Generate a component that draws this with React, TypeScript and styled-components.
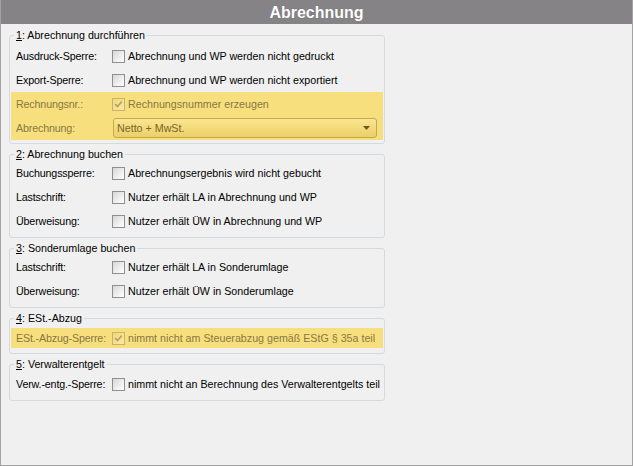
import React from "react";
import styled, { createGlobalStyle } from "styled-components";

const GlobalStyle = createGlobalStyle`
  html, body {
    margin: 0;
    padding: 0;
    background: #f0f0f0;
  }
  body {
    font-family: "Liberation Sans", Arial, sans-serif;
    font-size: 10.7px;
    color: #000;
  }
`;

const Window = styled.div`
  width: 633px;
  height: 466px;
  box-sizing: border-box;
  border: 1px solid #a3a3a3;
  border-top: none;
  background: #f0f0f0;
  display: flex;
  flex-direction: column;
`;

const Header = styled.div`
  height: 24px;
  flex: none;
  background: #868386;
  color: #fff;
  font-weight: bold;
  font-size: 16px;
  line-height: 25px;
  text-align: center;
  text-shadow: 0 0 1px rgba(60, 60, 60, 0.35);
`;

const Content = styled.div`
  display: flex;
  flex-direction: column;
  align-items: flex-start;
  gap: 3px;
  padding: 4px 0 0 8px;
`;

const Group = styled.fieldset<{ $top?: number; $bottom?: number }>`
  margin: 0;
  min-width: 0;
  width: 376px;
  box-sizing: border-box;
  border: 1px solid #d3dbe1;
  border-radius: 3px;
  padding: ${(p) => p.$top ?? 0}px 1px ${(p) => p.$bottom ?? 4}px;
`;

const Legend = styled.legend`
  margin-left: 3px;
  padding: 0 2px;
  line-height: 14px;
`;

const Key = styled.span`
  text-decoration: underline;
`;

const Highlight = styled.div`
  background: #f8df7e;
`;

const Row = styled.div<{ $h?: number }>`
  display: flex;
  align-items: center;
  height: ${(p) => p.$h ?? 24}px;
  padding-left: 5px;
`;

const Label = styled.span<{ $muted?: boolean }>`
  width: 96px;
  flex: none;
  white-space: nowrap;
  letter-spacing: -0.15px;
  color: ${(p) => (p.$muted ? "#877843" : "#000")};
`;

const Text = styled.span<{ $muted?: boolean }>`
  margin-left: 3px;
  white-space: nowrap;
  color: ${(p) => (p.$muted ? "#877843" : "#000")};
`;

const Box = styled.span<{ $muted?: boolean }>`
  width: 13px;
  height: 13px;
  box-sizing: border-box;
  flex: none;
  display: flex;
  align-items: center;
  justify-content: center;
  border: 1px solid ${(p) => (p.$muted ? "#c9b36a" : "#8e8f8f")};
  background: ${(p) =>
    p.$muted
      ? "linear-gradient(135deg, #f0d77c 0%, #fbeaa6 100%)"
      : "linear-gradient(135deg, #d6d6d6 0%, #f0f0f0 60%, #ffffff 100%)"};
`;

const Select = styled.div`
  margin-left: 1px;
  width: 264px;
  height: 20px;
  box-sizing: border-box;
  display: flex;
  align-items: center;
  justify-content: space-between;
  padding: 0 6px 0 3px;
  border: 1px solid #c4a94c;
  border-radius: 3px;
  background: linear-gradient(#fae590 0%, #f4da7a 50%, #ebcf6a 100%);
  color: #74662f;
`;

const Check = ({ checked, muted }: { checked?: boolean; muted?: boolean }) => (
  <Box $muted={muted}>
    {checked && (
      <svg width="9" height="9" viewBox="0 0 9 9">
        <path
          d="M1.2 4.2 L3.5 6.6 L7.8 1.6"
          fill="none"
          stroke="#b8a45a"
          strokeWidth="1.7"
        />
      </svg>
    )}
  </Box>
);

const Arrow = () => (
  <svg width="7" height="4" viewBox="0 0 7 4">
    <path d="M0 0 H7 L3.5 4 Z" fill="#6e5a1c" />
  </svg>
);

interface Item {
  label: string;
  text: string;
}

const CheckRow = ({ label, text }: Item) => (
  <Row>
    <Label>{label}</Label>
    <Check />
    <Text>{text}</Text>
  </Row>
);

export default function App() {
  return (
    <>
      <GlobalStyle />
      <Window>
        <Header>Abrechnung</Header>
        <Content>
          <Group $top={2} $bottom={3}>
            <Legend>
              <Key>1</Key>: Abrechnung durchführen
            </Legend>
            <CheckRow label="Ausdruck-Sperre:" text="Abrechnung und WP werden nicht gedruckt" />
            <CheckRow label="Export-Sperre:" text="Abrechnung und WP werden nicht exportiert" />
            <Highlight>
              <Row>
                <Label $muted>Rechnungsnr.:</Label>
                <Check checked muted />
                <Text $muted>Rechnungsnummer erzeugen</Text>
              </Row>
              <Row>
                <Label $muted>Abrechnung:</Label>
                <Select>
                  <span>Netto + MwSt.</span>
                  <Arrow />
                </Select>
              </Row>
            </Highlight>
          </Group>

          <Group>
            <Legend>
              <Key>2</Key>: Abrechnung buchen
            </Legend>
            <CheckRow label="Buchungssperre:" text="Abrechnungsergebnis wird nicht gebucht" />
            <CheckRow label="Lastschrift:" text="Nutzer erhält LA in Abrechnung und WP" />
            <CheckRow label="Überweisung:" text="Nutzer erhält ÜW in Abrechnung und WP" />
          </Group>

          <Group>
            <Legend>
              <Key>3</Key>: Sonderumlage buchen
            </Legend>
            <CheckRow label="Lastschrift:" text="Nutzer erhält LA in Sonderumlage" />
            <CheckRow label="Überweisung:" text="Nutzer erhält ÜW in Sonderumlage" />
          </Group>

          <Group $top={3} $bottom={5}>
            <Legend>
              <Key>4</Key>: ESt.-Abzug
            </Legend>
            <Highlight>
              <Row $h={20}>
                <Label $muted>ESt.-Abzug-Sperre:</Label>
                <Check checked muted />
                <Text $muted>nimmt nicht am Steuerabzug gemäß EStG § 35a teil</Text>
              </Row>
            </Highlight>
          </Group>

          <Group $top={1}>
            <Legend>
              <Key>5</Key>: Verwalterentgelt
            </Legend>
            <CheckRow
              label="Verw.-entg.-Sperre:"
              text="nimmt nicht an Berechnung des Verwalterentgelts teil"
            />
          </Group>
        </Content>
      </Window>
    </>
  );
}
